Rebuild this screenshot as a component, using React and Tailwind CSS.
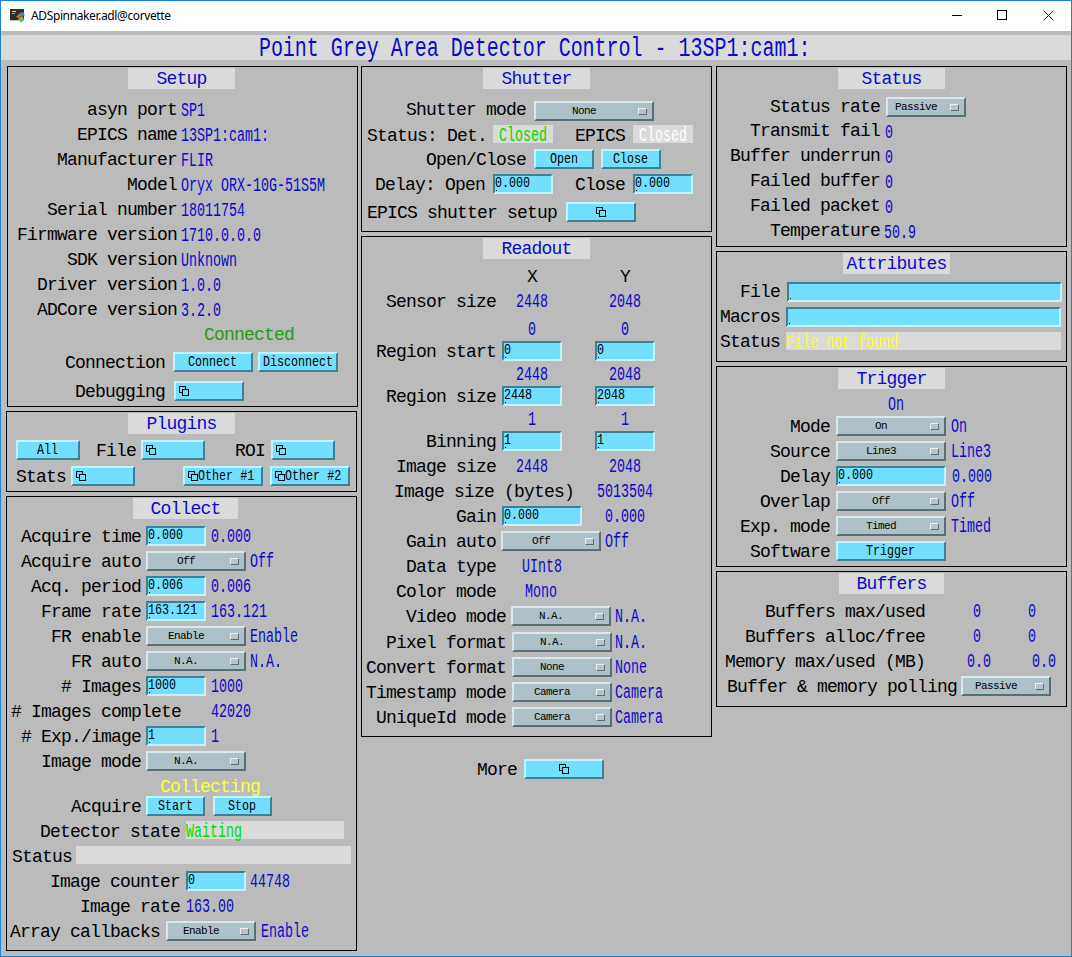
import React from "react";

const BLUE = "text-[#0a0ac8]";

const ALIGN = {
  end: "justify-end",
  start: "justify-start",
  center: "justify-center",
};

// label text, right aligned by default
const Lbl = ({ className = "", align = "end", color = "text-black", children }) => (
  <div
    className={`flex h-[20px] shrink-0 items-center whitespace-pre pt-[2px] text-[18px] tracking-[-0.8px] ${color} ${ALIGN[align]} ${className}`}
  >
    {children}
  </div>
);

// narrow monitor value
const Val = ({ className = "", color = BLUE, children }) => (
  <span
    className={`inline-block h-[20px] shrink-0 origin-left scale-x-[0.667] whitespace-pre text-[20px] leading-[21px] ${color} ${className}`}
  >
    {children}
  </span>
);

// monitor value centered in a fixed cell
const Mid = ({ className = "", children }) => (
  <div className={`flex h-[20px] shrink-0 justify-center ${className}`}>
    <span
      className={`inline-block shrink-0 origin-center scale-x-[0.667] whitespace-pre text-[20px] leading-[21px] ${BLUE}`}
    >
      {children}
    </span>
  </div>
);

const Row = ({ className = "h-[25px]", children }) => (
  <div className={`flex items-start pt-[2px] ${className}`}>{children}</div>
);

const Panel = ({ className = "", title, band = "w-[107px] ml-[120px]", children }) => (
  <section className={`shrink-0 border border-black pt-[1px] ${className}`}>
    <div
      className={`flex h-[21px] items-center justify-center bg-[#dadada] pt-[2px] text-[18px] tracking-[-0.8px] ${BLUE} ${band}`}
    >
      {title}
    </div>
    {children}
  </section>
);

const StackIcon = () => (
  <svg width="10" height="10" viewBox="0 0 10 10" className="shrink-0">
    <rect x="0.5" y="0.5" width="6" height="6" fill="none" stroke="#000" />
    <rect x="3.5" y="3.5" width="6" height="6" fill="#73dfff" stroke="#000" />
  </svg>
);

const Btn = ({ className = "", children }) => (
  <div
    className={`flex h-[20px] shrink-0 items-center justify-center overflow-hidden border-2 border-t-[#c2f3ff] border-r-[#3f8096] border-b-[#3f8096] border-l-[#c2f3ff] bg-[#73dfff] pt-[3px] ${className}`}
  >
    <span className="inline-block shrink-0 scale-x-[0.78] whitespace-pre text-[15px] text-black">
      {children}
    </span>
  </div>
);

const Related = ({ className = "", left, text }) => (
  <div
    className={`flex h-[20px] shrink-0 items-center overflow-hidden border-2 border-t-[#c2f3ff] border-r-[#3f8096] border-b-[#3f8096] border-l-[#c2f3ff] bg-[#73dfff] ${
      left ? "justify-start pl-[3px]" : "justify-center"
    } ${className}`}
  >
    <StackIcon />
    {text && (
      <span className="inline-block shrink-0 origin-left scale-x-[0.78] whitespace-pre pt-[3px] text-[15px] text-black">
        {text}
      </span>
    )}
  </div>
);

const Menu = ({ className = "", children }) => (
  <div
    className={`flex h-[20px] shrink-0 items-center border-2 border-t-[#d8e8ec] border-r-[#5a6e76] border-b-[#5a6e76] border-l-[#d8e8ec] bg-[#aec0c8] ${className}`}
  >
    <span className="flex-1 whitespace-pre pr-[6px] text-center text-[11px] tracking-[-0.6px] text-black">
      {children}
    </span>
    <span className="mr-[5px] h-[7px] w-[9px] shrink-0 border border-t-[#f0f0f0] border-r-[#5a6e76] border-b-[#5a6e76] border-l-[#f0f0f0] bg-[#b8c4c8]" />
  </div>
);

const Input = ({ className = "", children }) => (
  <div
    className={`relative flex h-[20px] shrink-0 items-center overflow-hidden border-2 border-t-[#3f8096] border-r-[#c2f3ff] border-b-[#c2f3ff] border-l-[#3f8096] bg-[#73dfff] ${className}`}
  >
    <span className="inline-block shrink-0 origin-left scale-x-[0.78] whitespace-pre text-[15px] text-black">
      {children}
    </span>
    <span className="absolute bottom-[1px] left-[1px] h-[1px] w-[1px] bg-black" />
  </div>
);

const Field = ({ className = "", valClass = "", color, children }) => (
  <div className={`h-[18px] shrink-0 bg-[#dadada] ${className}`}>
    {children && (
      <Val className={`-mt-[1px] ${valClass}`} color={color}>
        {children}
      </Val>
    )}
  </div>
);

const SetupPanel = () => {
  const rows = [
    ["asyn port", "SP1"],
    ["EPICS name", "13SP1:cam1:"],
    ["Manufacturer", "FLIR"],
    ["Model", "Oryx ORX-10G-51S5M"],
    ["Serial number", "18011754"],
    ["Firmware version", "1710.0.0.0"],
    ["SDK version", "Unknown"],
    ["Driver version", "1.0.0"],
    ["ADCore version", "3.2.0"],
  ];
  return (
    <Panel title="Setup" className="ml-[1px] h-[341px] w-[351px]">
      <div className="mt-[8px]">
        {rows.map(([label, value]) => (
          <Row key={label}>
            <Lbl className="w-[169px]">{label}</Lbl>
            <Val className="ml-[4px] mt-[1px]">{value}</Val>
          </Row>
        ))}
        <Row>
          <Lbl align="start" color="text-[#289a14]" className="ml-[196px]">Connected</Lbl>
        </Row>
        <Row className="h-[29px] pt-[5px]">
          <Lbl className="w-[157px]">Connection</Lbl>
          <Btn className="ml-[8px] w-[80px]">Connect</Btn>
          <Btn className="ml-[5px] w-[80px]">Disconnect</Btn>
        </Row>
        <Row className="h-[28px] pt-[5px]">
          <Lbl className="w-[157px]">Debugging</Lbl>
          <Related left className="ml-[9px] w-[70px]" />
        </Row>
      </div>
    </Panel>
  );
};

const PluginsPanel = () => (
  <Panel title="Plugins" band="w-[107px] ml-[121px]" className="h-[81px] w-[351px]">
    <div className="mt-[6px] flex h-[20px] pl-[9px]">
      <Btn className="w-[64px]">All</Btn>
      <Lbl className="w-[56px]">File</Lbl>
      <Related left className="ml-[5px] w-[64px]" />
      <Lbl className="w-[60px]">ROI</Lbl>
      <Related left className="ml-[6px] w-[64px]" />
    </div>
    <div className="mt-[6px] flex h-[20px] pl-[9px]">
      <Lbl align="start" className="w-[50px]">Stats</Lbl>
      <Related left className="ml-[5px] w-[64px]" />
      <Related left text="Other #1" className="ml-[48px] w-[80px]" />
      <Related left text="Other #2" className="ml-[7px] w-[80px]" />
    </div>
  </Panel>
);

const CollectPanel = () => (
  <Panel title="Collect" band="w-[105px] ml-[126px]" className="h-[455px] w-[351px]">
    <div className="mt-[5px]">
      <Row>
        <Lbl className="w-[134px]">Acquire time</Lbl>
        <Input className="ml-[5px] w-[60px]">0.000</Input>
        <Val className="ml-[5px]">0.000</Val>
      </Row>
      <Row>
        <Lbl className="w-[134px]">Acquire auto</Lbl>
        <Menu className="ml-[5px] w-[100px]">Off</Menu>
        <Val className="ml-[4px]">Off</Val>
      </Row>
      <Row>
        <Lbl className="w-[134px]">Acq. period</Lbl>
        <Input className="ml-[5px] w-[60px]">0.006</Input>
        <Val className="ml-[5px]">0.006</Val>
      </Row>
      <Row>
        <Lbl className="w-[134px]">Frame rate</Lbl>
        <Input className="ml-[5px] w-[60px]">163.121</Input>
        <Val className="ml-[5px]">163.121</Val>
      </Row>
      <Row>
        <Lbl className="w-[134px]">FR enable</Lbl>
        <Menu className="ml-[5px] w-[100px]">Enable</Menu>
        <Val className="ml-[4px]">Enable</Val>
      </Row>
      <Row>
        <Lbl className="w-[134px]">FR auto</Lbl>
        <Menu className="ml-[5px] w-[100px]">N.A.</Menu>
        <Val className="ml-[4px]">N.A.</Val>
      </Row>
      <Row>
        <Lbl className="w-[134px]"># Images</Lbl>
        <Input className="ml-[5px] w-[60px]">1000</Input>
        <Val className="ml-[5px]">1000</Val>
      </Row>
      <Row>
        <Lbl className="w-[174px]"># Images complete</Lbl>
        <Val className="ml-[30px]">42020</Val>
      </Row>
      <Row>
        <Lbl className="w-[134px]"># Exp./image</Lbl>
        <Input className="ml-[5px] w-[60px]">1</Input>
        <Val className="ml-[5px]">1</Val>
      </Row>
      <Row>
        <Lbl className="w-[134px]">Image mode</Lbl>
        <Menu className="ml-[5px] w-[100px]">N.A.</Menu>
      </Row>
      <Row className="h-[20px] pt-[1px]">
        <Lbl align="start" color="text-[#ffff3c]" className="ml-[153px] h-[19px]">Collecting</Lbl>
      </Row>
      <Row>
        <Lbl className="w-[134px]">Acquire</Lbl>
        <Btn className="ml-[5px] w-[59px]">Start</Btn>
        <Btn className="ml-[8px] w-[59px]">Stop</Btn>
      </Row>
      <Row>
        <Lbl className="h-[18px] w-[173px]">Detector state</Lbl>
        <Field className="ml-[6px] w-[158px]" color="text-[#00dc00]">Waiting</Field>
      </Row>
      <Row>
        <Lbl align="start" className="ml-[5px] h-[18px] w-[58px]">Status</Lbl>
        <Field className="ml-[6px] w-[275px]" />
      </Row>
      <Row>
        <Lbl className="w-[173px]">Image counter</Lbl>
        <Input className="ml-[6px] w-[60px]">0</Input>
        <Val className="ml-[4px]">44748</Val>
      </Row>
      <Row>
        <Lbl className="w-[173px]">Image rate</Lbl>
        <Val className="ml-[6px]">163.00</Val>
      </Row>
      <Row>
        <Lbl className="w-[153px]">Array callbacks</Lbl>
        <Menu className="ml-[6px] w-[90px]">Enable</Menu>
        <Val className="ml-[5px]">Enable</Val>
      </Row>
    </div>
  </Panel>
);

const ShutterPanel = () => (
  <Panel title="Shutter" band="w-[107px] ml-[121px]" className="h-[166px] w-[351px]">
    <div className="mt-[10px]">
      <Row className="h-[24px]">
        <Lbl className="-mt-[2px] w-[164px]">Shutter mode</Lbl>
        <Menu className="ml-[8px] w-[120px]">None</Menu>
      </Row>
      <Row className="h-[24px]">
        <Lbl align="start" className="ml-[5px] h-[18px] w-[126px]">Status: Det.</Lbl>
        <Field className="w-[60px]" valClass="ml-[6px]" color="text-[#00dc00]">Closed</Field>
        <Lbl className="h-[18px] w-[72px]">EPICS</Lbl>
        <Field className="ml-[8px] w-[60px]" valClass="ml-[6px]" color="text-white">Closed</Field>
      </Row>
      <Row>
        <Lbl className="w-[164px]">Open/Close</Lbl>
        <Btn className="ml-[8px] w-[60px]">Open</Btn>
        <Btn className="ml-[7px] w-[60px]">Close</Btn>
      </Row>
      <Row className="h-[28px]">
        <Lbl className="w-[123px]">Delay: Open</Lbl>
        <Input className="ml-[8px] w-[60px]">0.000</Input>
        <Lbl className="w-[72px]">Close</Lbl>
        <Input className="ml-[8px] w-[60px]">0.000</Input>
      </Row>
      <Row>
        <Lbl align="start" className="ml-[5px] w-[199px]">EPICS shutter setup</Lbl>
        <Related className="w-[70px]" />
      </Row>
    </div>
  </Panel>
);

const ReadoutPanel = () => {
  const menus = [
    ["Pixel format", "N.A."],
    ["Convert format", "None"],
    ["Timestamp mode", "Camera"],
    ["UniqueId mode", "Camera"],
  ];
  return (
    <Panel title="Readout" band="w-[107px] ml-[121px]" className="h-[501px] w-[351px]">
      <div className="mt-[5px]">
        <Row>
          <div className="w-[140px] shrink-0" />
          <Lbl align="center" className="w-[60px]">X</Lbl>
          <Lbl align="center" className="ml-[33px] w-[60px]">Y</Lbl>
        </Row>
        <Row className="h-[28px]">
          <Lbl className="w-[134px]">Sensor size</Lbl>
          <Mid className="ml-[6px] w-[60px]">2448</Mid>
          <Mid className="ml-[33px] w-[60px]">2048</Mid>
        </Row>
        <Row className="h-[22px]">
          <Mid className="ml-[140px] w-[60px]">0</Mid>
          <Mid className="ml-[33px] w-[60px]">0</Mid>
        </Row>
        <Row className="h-[23px]">
          <Lbl className="w-[134px]">Region start</Lbl>
          <Input className="ml-[6px] w-[60px]">0</Input>
          <Input className="ml-[33px] w-[60px]">0</Input>
        </Row>
        <Row className="h-[22px]">
          <Mid className="ml-[140px] w-[60px]">2448</Mid>
          <Mid className="ml-[33px] w-[60px]">2048</Mid>
        </Row>
        <Row className="h-[23px]">
          <Lbl className="w-[134px]">Region size</Lbl>
          <Input className="ml-[6px] w-[60px]">2448</Input>
          <Input className="ml-[33px] w-[60px]">2048</Input>
        </Row>
        <Row className="h-[22px]">
          <Mid className="ml-[140px] w-[60px]">1</Mid>
          <Mid className="ml-[33px] w-[60px]">1</Mid>
        </Row>
        <Row>
          <Lbl className="w-[134px]">Binning</Lbl>
          <Input className="ml-[6px] w-[60px]">1</Input>
          <Input className="ml-[33px] w-[60px]">1</Input>
        </Row>
        <Row>
          <Lbl className="w-[134px]">Image size</Lbl>
          <Mid className="ml-[6px] w-[60px]">2448</Mid>
          <Mid className="ml-[33px] w-[60px]">2048</Mid>
        </Row>
        <Row>
          <Lbl className="w-[212px]">Image size (bytes)</Lbl>
          <Mid className="ml-[21px] w-[60px]">5013504</Mid>
        </Row>
        <Row>
          <Lbl className="w-[134px]">Gain</Lbl>
          <Input className="ml-[6px] w-[80px]">0.000</Input>
          <Mid className="ml-[13px] w-[60px]">0.000</Mid>
        </Row>
        <Row>
          <Lbl className="w-[134px]">Gain auto</Lbl>
          <Menu className="ml-[5px] w-[100px]">Off</Menu>
          <Val className="ml-[4px]">Off</Val>
        </Row>
        <Row>
          <Lbl className="w-[134px]">Data type</Lbl>
          <Val className="ml-[26px]">UInt8</Val>
        </Row>
        <Row>
          <Lbl className="w-[134px]">Color mode</Lbl>
          <Val className="ml-[29px]">Mono</Val>
        </Row>
        <Row className="h-[26px]">
          <Lbl className="w-[144px]">Video mode</Lbl>
          <Menu className="ml-[5px] w-[100px]">N.A.</Menu>
          <Val className="ml-[4px]">N.A.</Val>
        </Row>
        {menus.map(([label, value]) => (
          <Row key={label}>
            <Lbl className="w-[144px]">{label}</Lbl>
            <Menu className="ml-[6px] w-[100px]">{value}</Menu>
            <Val className="ml-[3px]">{value}</Val>
          </Row>
        ))}
      </div>
    </Panel>
  );
};

const StatusPanel = () => {
  const rows = [
    ["Transmit fail", "0", "ml-[5px]"],
    ["Buffer underrun", "0", "ml-[5px]"],
    ["Failed buffer", "0", "ml-[5px]"],
    ["Failed packet", "0", "ml-[5px]"],
    ["Temperature", "50.9", "ml-[4px]"],
  ];
  return (
    <Panel title="Status" band="w-[107px] ml-[121px]" className="h-[181px] w-[351px]">
      <div className="mt-[6px]">
        <Row className="h-[24px]">
          <Lbl className="-mt-[1px] w-[163px]">Status rate</Lbl>
          <Menu className="ml-[6px] w-[80px]">Passive</Menu>
        </Row>
        {rows.map(([label, value, gap]) => (
          <Row key={label}>
            <Lbl className="-mt-[1px] w-[163px]">{label}</Lbl>
            <Val className={`mt-[1px] ${gap}`}>{value}</Val>
          </Row>
        ))}
      </div>
    </Panel>
  );
};

const AttributesPanel = () => (
  <Panel title="Attributes" band="w-[107px] ml-[126px]" className="h-[111px] w-[351px]">
    <div className="mt-[6px]">
      <Row>
        <Lbl className="-mt-[1px] w-[63px]">File</Lbl>
        <Input className="ml-[7px] w-[275px]" />
      </Row>
      <Row>
        <Lbl className="-mt-[1px] w-[63px]">Macros</Lbl>
        <Input className="ml-[6px] w-[275px]" />
      </Row>
      <Row>
        <Lbl className="-mt-[1px] h-[18px] w-[63px]">Status</Lbl>
        <Field className="ml-[6px] w-[275px]" color="text-[#ffff00]">File not found</Field>
      </Row>
    </div>
  </Panel>
);

const TriggerPanel = () => (
  <Panel title="Trigger" band="w-[107px] ml-[121px]" className="h-[201px] w-[351px]">
    <div className="mt-[3px]">
      <Row className="h-[22px]">
        <Val className="ml-[171px]">On</Val>
      </Row>
      <Row>
        <Lbl className="w-[113px]">Mode</Lbl>
        <Menu className="ml-[6px] w-[110px]">On</Menu>
        <Val className="ml-[5px]">On</Val>
      </Row>
      <Row>
        <Lbl className="w-[113px]">Source</Lbl>
        <Menu className="ml-[6px] w-[110px]">Line3</Menu>
        <Val className="ml-[5px]">Line3</Val>
      </Row>
      <Row>
        <Lbl className="w-[113px]">Delay</Lbl>
        <Input className="ml-[6px] w-[110px]">0.000</Input>
        <Val className="ml-[6px]">0.000</Val>
      </Row>
      <Row>
        <Lbl className="w-[113px]">Overlap</Lbl>
        <Menu className="ml-[6px] w-[110px]">Off</Menu>
        <Val className="ml-[5px]">Off</Val>
      </Row>
      <Row>
        <Lbl className="w-[113px]">Exp. mode</Lbl>
        <Menu className="ml-[6px] w-[110px]">Timed</Menu>
        <Val className="ml-[5px]">Timed</Val>
      </Row>
      <Row>
        <Lbl className="w-[113px]">Software</Lbl>
        <Btn className="ml-[6px] w-[110px]">Trigger</Btn>
      </Row>
    </div>
  </Panel>
);

const BuffersPanel = () => (
  <Panel title="Buffers" band="w-[105px] ml-[122px]" className="h-[136px] w-[351px]">
    <div className="mt-[5px]">
      <Row>
        <Lbl className="w-[208px]">Buffers max/used</Lbl>
        <Mid className="ml-[32px] w-[40px]">0</Mid>
        <Mid className="ml-[15px] w-[40px]">0</Mid>
      </Row>
      <Row>
        <Lbl className="w-[208px]">Buffers alloc/free</Lbl>
        <Mid className="ml-[32px] w-[40px]">0</Mid>
        <Mid className="ml-[15px] w-[40px]">0</Mid>
      </Row>
      <Row>
        <Lbl className="w-[208px]">Memory max/used (MB)</Lbl>
        <Mid className="ml-[34px] w-[40px]">0.0</Mid>
        <Mid className="ml-[25px] w-[40px]">0.0</Mid>
      </Row>
      <Row>
        <Lbl align="start" className="ml-[10px] w-[234px]">Buffer &amp; memory polling</Lbl>
        <Menu className="w-[90px]">Passive</Menu>
      </Row>
    </div>
  </Panel>
);

const TitleBar = () => (
  <div className="flex h-[30px] shrink-0 items-center bg-white pl-[9px] font-['Noto_Sans',sans-serif]">
    <svg width="16" height="16" viewBox="0 0 16 16" className="shrink-0">
      <rect x="0" y="1" width="14" height="11" fill="#2e2e2e" />
      <rect x="0" y="12" width="14" height="1" fill="#bdbdbd" />
      <rect x="2" y="3" width="4" height="1" fill="#d8d8d8" />
      <rect x="2" y="5" width="3" height="1" fill="#a0a0a0" />
      <path d="M6 9l4-4 2 2-3 3z" fill="#e8632c" />
      <path d="M10 5l3-1 2 3-3 2z" fill="#3d7fd8" />
      <path d="M8 11l4-3 2 3-3 4z" fill="#6cc04a" />
    </svg>
    <span className="ml-[5px] text-[12px] leading-none tracking-[-0.38px] text-black">
      ADSpinnaker.adl@corvette
    </span>
    <div className="ml-auto -mt-[2px] flex items-center">
      <svg width="11" height="11" viewBox="0 0 11 11" className="mr-[34px]">
        <line x1="0" y1="5.5" x2="10" y2="5.5" stroke="#000" />
      </svg>
      <svg width="11" height="11" viewBox="0 0 11 11" className="mr-[35px]">
        <rect x="0.5" y="0.5" width="9" height="9" fill="none" stroke="#000" />
      </svg>
      <svg width="11" height="11" viewBox="0 0 11 11" className="mr-[17px]">
        <path d="M0.5 0.5L10.5 10.5M10.5 0.5L0.5 10.5" stroke="#222" fill="none" />
      </svg>
    </div>
  </div>
);

export default function App() {
  return (
    <div className="flex h-[957px] w-[1072px] flex-col overflow-hidden border border-[#1883d7] bg-[#bbbbbb] font-['Liberation_Mono',monospace]">
      <TitleBar />
      <div className="mt-[4px] flex h-[25px] shrink-0 items-center justify-center bg-[#dadada] pr-[2px]">
        <span className={`mt-[4px] inline-block shrink-0 origin-center scale-x-[0.74] whitespace-pre text-[27px] leading-[25px] ${BLUE}`}>
          Point Grey Area Detector Control - 13SP1:cam1:
        </span>
      </div>
      <main className="flex gap-[4px] pl-[5px] pt-[6px]">
        <div className="flex w-[351px] shrink-0 flex-col gap-[4px]">
          <SetupPanel />
          <PluginsPanel />
          <CollectPanel />
        </div>
        <div className="flex w-[351px] shrink-0 flex-col gap-[4px]">
          <ShutterPanel />
          <ReadoutPanel />
          <div className="mt-[18px] flex h-[20px]">
            <Lbl className="w-[156px]">More</Lbl>
            <Related className="ml-[7px] w-[80px]" />
          </div>
        </div>
        <div className="flex w-[351px] shrink-0 flex-col gap-[4px]">
          <StatusPanel />
          <AttributesPanel />
          <TriggerPanel />
          <BuffersPanel />
        </div>
      </main>
    </div>
  );
}
